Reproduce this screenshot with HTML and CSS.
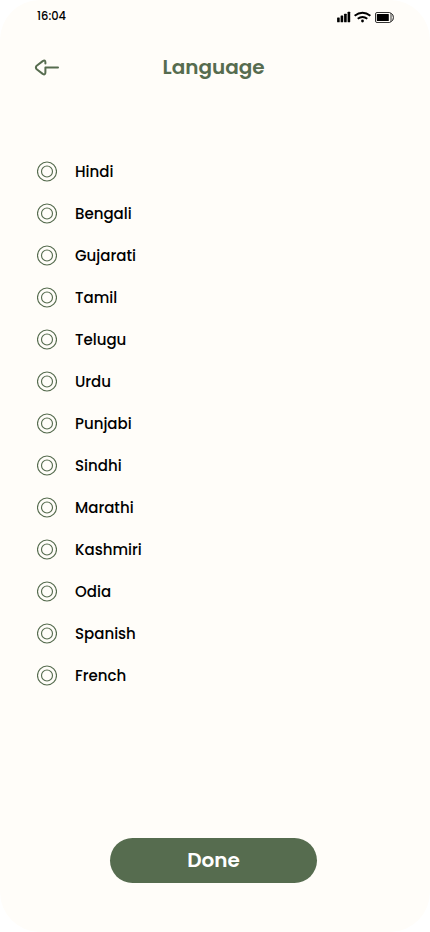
FILE: index.html
```html
<!DOCTYPE html>
<html lang="en">
<head>
<meta charset="utf-8">
<title>Language</title>
<link rel="stylesheet" href="styles.css">
</head>
<body>
<main class="screen">
  <div class="status">
    <span class="time">16:04</span>
    <svg class="indicators" width="58" height="12" viewBox="0 0 58 12">
      <g fill="#000">
        <rect x="0.1" y="6.4" width="2.6" height="4.8" rx=".5"/>
        <rect x="3.6" y="4.6" width="2.6" height="6.6" rx=".5"/>
        <rect x="7.1" y="2.8" width="2.6" height="8.4" rx=".5"/>
        <rect x="10.6" y="0.8" width="2.6" height="10.4" rx=".5"/>
        <circle cx="25.5" cy="10" r="1.4"/>
        <rect x="39.8" y="3" width="12" height="7" rx=".6"/>
      </g>
      <g fill="none" stroke="#000">
        <path d="M17.6 4.8Q25.5-1.2 33.4 4.8M20.7 7.8Q25.5 4.1 30.3 7.8" stroke-width="1.9"/>
        <rect x="38.5" y="1.5" width="15.5" height="10" rx="1.5" stroke-width=".8"/>
        <path d="M54.3 2.4Q56.4 3.4 56.4 6.5T54.3 10.5" stroke-width=".9"/>
      </g>
    </svg>
  </div>
  <header class="header">
    <svg class="back" width="26" height="18" viewBox="0 0 26 18" fill="none" stroke="#566c4f" stroke-width="2" stroke-linecap="round" stroke-linejoin="round">
      <path d="M24 9.5H11.4V14.2Q11.4 17.4 8.7 15.9L2.7 11.3Q1.1 9.5 2.7 7.7L8.7 3.1Q11.4 1.5 11.4 4.6V5.4"/>
    </svg>
    <h1 class="title">Language</h1>
  </header>
  <svg class="symbols" width="0" height="0">
    <symbol id="radio" viewBox="0 0 20 21">
      <circle cx="10" cy="10.5" r="9.5"/>
      <circle cx="10" cy="10.5" r="5.5"/>
    </symbol>
  </svg>
  <div class="list">
    <div class="row"><svg class="radio"><use href="#radio"/></svg><span>Hindi</span></div>
    <div class="row"><svg class="radio"><use href="#radio"/></svg><span>Bengali</span></div>
    <div class="row"><svg class="radio"><use href="#radio"/></svg><span>Gujarati</span></div>
    <div class="row"><svg class="radio"><use href="#radio"/></svg><span>Tamil</span></div>
    <div class="row"><svg class="radio"><use href="#radio"/></svg><span>Telugu</span></div>
    <div class="row"><svg class="radio"><use href="#radio"/></svg><span>Urdu</span></div>
    <div class="row"><svg class="radio"><use href="#radio"/></svg><span>Punjabi</span></div>
    <div class="row"><svg class="radio"><use href="#radio"/></svg><span>Sindhi</span></div>
    <div class="row"><svg class="radio"><use href="#radio"/></svg><span>Marathi</span></div>
    <div class="row"><svg class="radio"><use href="#radio"/></svg><span>Kashmiri</span></div>
    <div class="row"><svg class="radio"><use href="#radio"/></svg><span>Odia</span></div>
    <div class="row"><svg class="radio"><use href="#radio"/></svg><span>Spanish</span></div>
    <div class="row"><svg class="radio"><use href="#radio"/></svg><span>French</span></div>
  </div>
  <button class="done">Done</button>
</main>
</body>
</html>
```
FILE: styles.css
```css
* { box-sizing: border-box; }
body {
  margin: 0;
  background: #fff;
  font-family: Poppins, Inter, sans-serif;
}
.screen {
  width: 430px;
  height: 932px;
  display: flex;
  flex-direction: column;
  background: #fffdf9;
  border-radius: 40px;
  overflow: hidden;
}
.status {
  height: 32px;
  padding: 0 35px 0 37px;
  display: flex;
  justify-content: space-between;
  align-items: center;
}
.time { font-size: 11.5px; font-weight: 500; }
.indicators { margin-top: 2px; }
.header {
  height: 70px;
  padding-left: 34px;
  display: grid;
  grid-template-columns: 128.5px auto;
  align-items: center;
}
.title {
  margin: 0;
  color: #566c4f;
  font-size: 20px;
  font-weight: 600;
}
.symbols { position: absolute; }
.list {
  margin-top: 48px;
  padding-left: 37px;
}
.row {
  height: 42px;
  display: flex;
  align-items: center;
  gap: 18px;
  font-size: 15px;
  font-weight: 500;
  color: #000;
}
.radio {
  width: 20px;
  height: 21px;
  margin-top: 1px;
  overflow: visible;
  fill: none;
  stroke: #566c4f;
  stroke-width: 1.15px;
}
.done {
  width: 207px;
  height: 45px;
  margin: 142px 0 0 110px;
  padding: 0 0 2px;
  border: 0;
  border-radius: 23px;
  background: #566c4f;
  color: #fff;
  font: 600 20px Poppins, Inter, sans-serif;
}
```
